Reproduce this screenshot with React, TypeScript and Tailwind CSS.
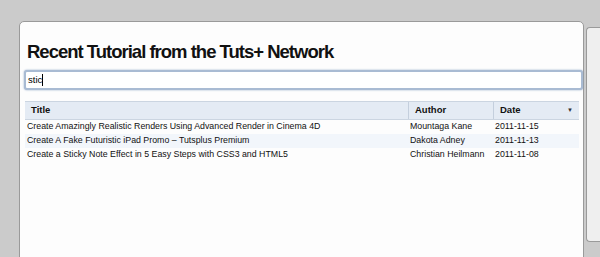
import React from 'react';

interface Tutorial {
  title: string;
  author: string;
  date: string;
}

const tutorials: Tutorial[] = [
  { title: 'Create Amazingly Realistic Renders Using Advanced Render in Cinema 4D', author: 'Mountaga Kane', date: '2011-11-15' },
  { title: 'Create A Fake Futuristic iPad Promo – Tutsplus Premium', author: 'Dakota Adney', date: '2011-11-13' },
  { title: 'Create a Sticky Note Effect in 5 Easy Steps with CSS3 and HTML5', author: 'Christian Heilmann', date: '2011-11-08' },
];

const App: React.FC = () => {
  return (
    <div className="w-[600px] h-[257px] bg-[#cbcbcb] flex overflow-hidden font-['Liberation_Sans',Arial,sans-serif]">
      <div className="ml-[19px] mt-[21px] w-[567px] h-[260px] bg-[#fdfdfd] border border-[#9a9a9a] rounded-t-[5px] flex flex-col">
        <h1 className="mt-[18px] ml-[7px] text-[18.5px] leading-[24px] font-bold text-[#111] tracking-[-1px]">
          Recent Tutorial from the Tuts+ Network
        </h1>
        <div className="mt-[6px] ml-[4px] w-[559px] h-[20px] border-2 border-[#a9bbd3] rounded-[3px] bg-white shadow-[0_0_2px_#8fa6c7] flex items-center px-[2px]">
          <span className="text-[9.5px] text-black">stic</span>
          <span className="w-px h-[12px] bg-black" />
        </div>
        <div className="mt-[11px] ml-[5px] w-[554px] text-[8.8px] text-[#111]">
          <div className="flex h-[19px] bg-[#e4ebf4] border-t border-b border-[#cbd5e1] font-bold items-center text-[9.5px]">
            <div className="flex-1 pl-[6px]">Title</div>
            <div className="w-[85px] pl-[6px] border-l border-[#c4cfdd] h-full flex items-center">Author</div>
            <div className="w-[86px] pl-[6px] pr-[6px] border-l border-[#c4cfdd] h-full flex items-center justify-between">
              <span>Date</span>
              <span className="text-[6px] text-[#333]">▼</span>
            </div>
          </div>
          {tutorials.map((t, i) => (
            <div key={t.date} className={`flex h-[14px] items-center ${i % 2 === 1 ? 'bg-[#f2f6fb]' : 'bg-transparent'}`}>
              <div className="flex-1 pl-[2px] whitespace-nowrap">{t.title}</div>
              <div className="w-[85px] pl-[2px] whitespace-nowrap">{t.author}</div>
              <div className="w-[86px] pl-[2px]">{t.date}</div>
            </div>
          ))}
        </div>
      </div>
      <div className="ml-[2px] mt-[27px] w-[20px] h-[215px] bg-[#efefef] border-l border-t border-b border-[#9a9a9a] rounded-l-[4px]" />
    </div>
  );
};

export default App;
